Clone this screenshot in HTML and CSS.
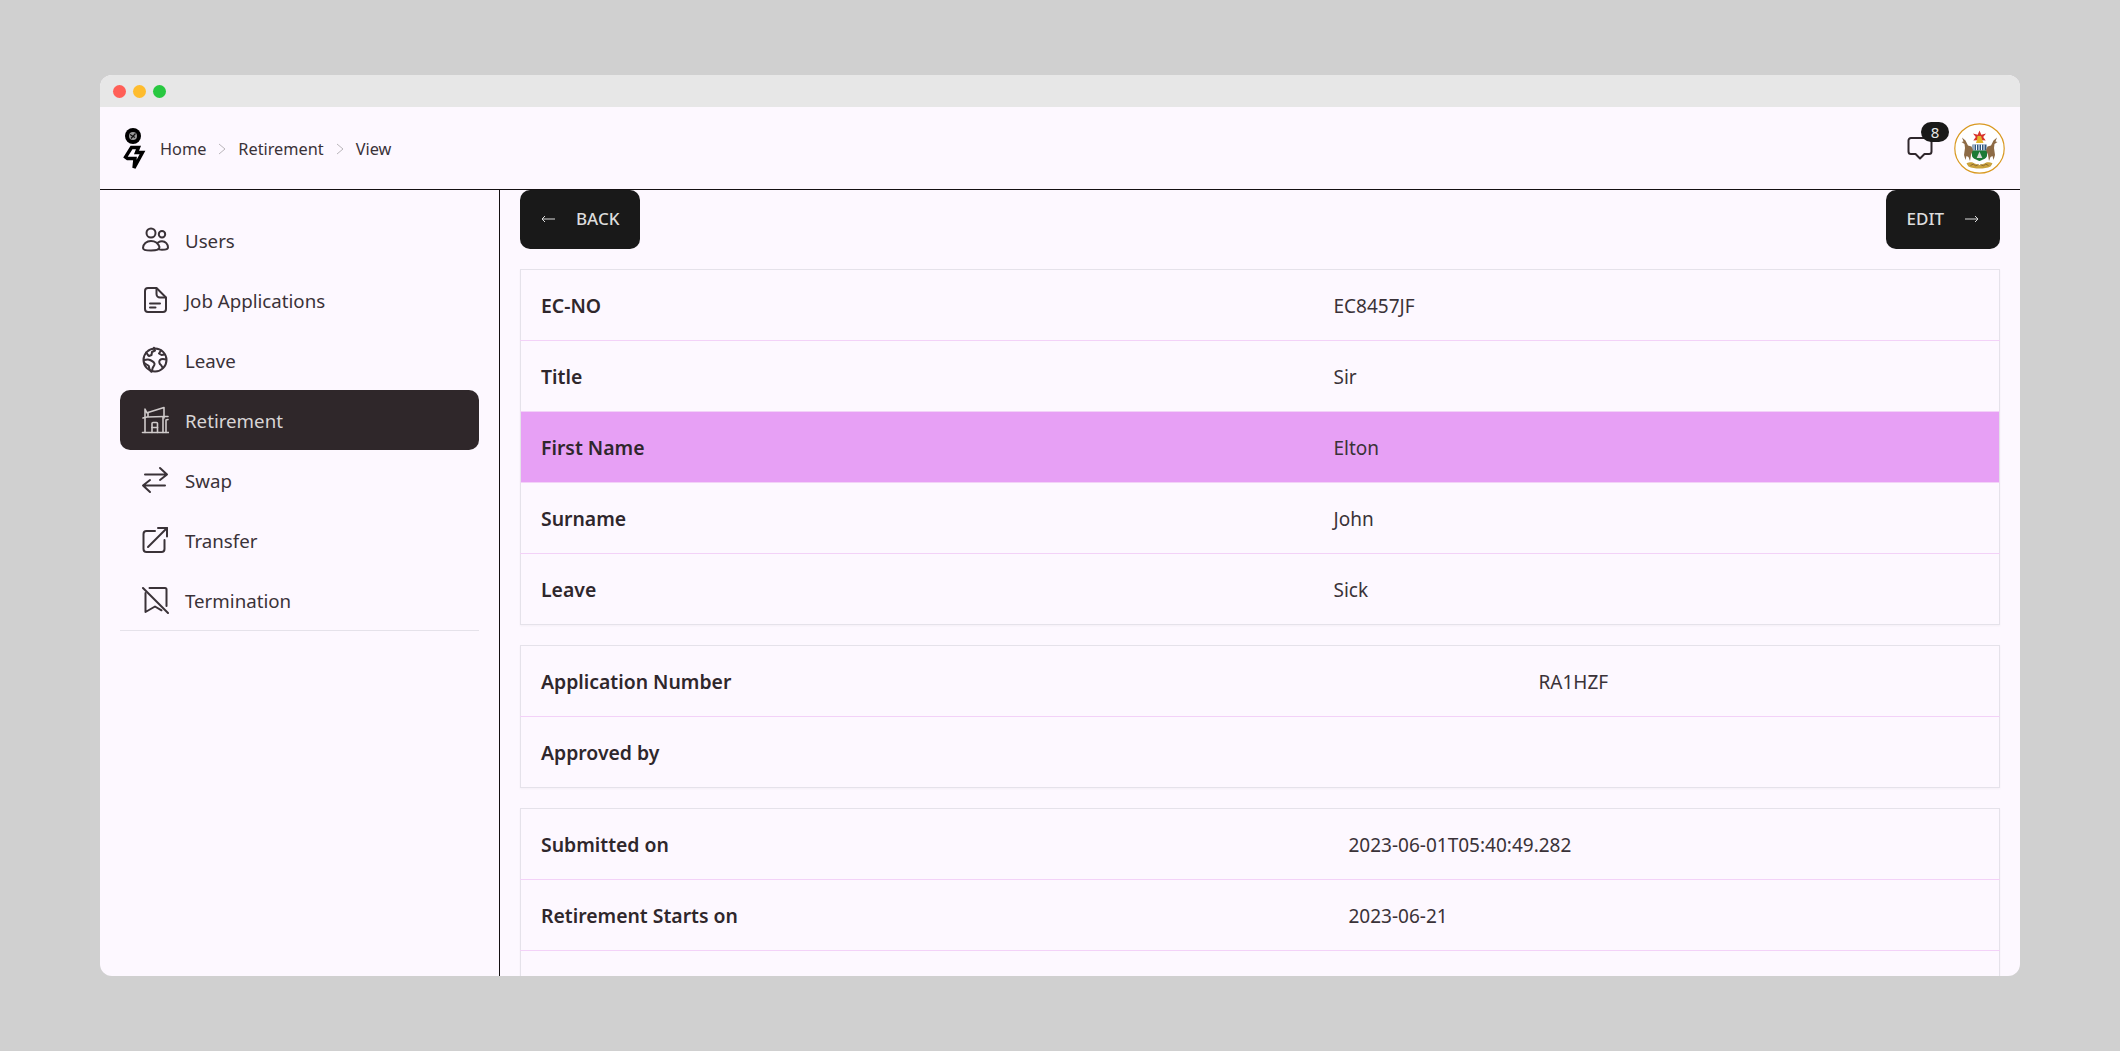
FILE: index.html
```html
<!DOCTYPE html>
<html lang="en">
<head>
<meta charset="utf-8">
<title>Retirement View</title>
<link rel="stylesheet" href="styles.css">
</head>
<body>
<div class="window">
  <div class="titlebar">
    <span class="dot dot-red"></span><span class="dot dot-yellow"></span><span class="dot dot-green"></span>
  </div>
  <header class="topbar">
    <div class="crumbs">
      <svg class="logo" viewBox="0 0 24 44" width="24" height="44">
        <circle cx="11" cy="10" r="8" fill="#000"/>
        <circle cx="11" cy="10" r="4" fill="#999"/>
        <path d="M8 8.500l5 3M13.500 7.500l-4.500 5" stroke="#111" stroke-width="1.200"/>
        <path d="M9.500 21.500h7l-2 5h6L12 42l1-9.500H5.500L3.500 31z" fill="none" stroke="#000" stroke-width="3.400" stroke-linejoin="miter"/>
      </svg>
      <a class="crumb">Home</a>
      <svg class="chev" viewBox="0 0 10 12" width="10" height="12"><path d="M2 1l6 5-6 5" fill="none" stroke="#b9b5ba" stroke-width="1"/></svg>
      <a class="crumb">Retirement</a>
      <svg class="chev" viewBox="0 0 10 12" width="10" height="12"><path d="M2 1l6 5-6 5" fill="none" stroke="#b9b5ba" stroke-width="1"/></svg>
      <a class="crumb">View</a>
    </div>
    <div class="top-actions">
      <div class="chat">
        <svg viewBox="0 0 28 26" width="28" height="26"><path d="M5 3h18a2.500 2.500 0 0 1 2.500 2.500v11A2.500 2.500 0 0 1 23 19h-4.500L14 23.500 9.500 19H5a2.500 2.500 0 0 1-2.500-2.500v-11A2.500 2.500 0 0 1 5 3z" fill="none" stroke="#2f272c" stroke-width="2" stroke-linejoin="round"/></svg>
        <span class="badge">8</span>
      </div>
      <svg class="crest" viewBox="-25.500 -25.500 51 51" width="51" height="51">
        <circle r="24.700" fill="#fff" stroke="#d99a22" stroke-width="1.200"/>
        <path d="M0-18l1.800 4.200 4.700-1.200-2.800 3.600 2.500 3.400-6.200-.5-6.200.5 2.500-3.400-2.800-3.600 4.700 1.200z" fill="#d8342c"/>
        <path d="M-2-12.500h3.500l1.500 4.500 1 2.500h-7.500l1-3z" fill="#e2b52b"/>
        <rect x="-7" y="-4" width="14" height="6" fill="#2f567e"/>
        <path d="M-5.500-4v6M-3-4v6M-.5-4v6M2-4v6M4.500-4v6" stroke="#fff" stroke-width="1"/>
        <path d="M-7.500 2h15v5c0 2.500-3.500 4-7.500 5.500-4-1.500-7.500-3-7.500-5.500z" fill="#1c7a35"/>
        <path d="M0 3l2.800 6.500h-5.600z" fill="#d8d8d8"/>
        <path d="M-8-2l-3.500-1-2.500-5-3.500-3 1.500 4-2 .500 3 2 .500 4-1 7 1.500 5 1-4 2 1 1.500 4 1-6 2-5z" fill="#8d6b45"/>
        <path d="M8-2l3.500-1 2.500-5 3.500-3-1.500 4 2 .500-3 2-.500 4 1 7-1.500 5-1-4-2 1-1.500 4-1-6-2-5z" fill="#8d6b45"/>
        <path d="M-13 15c4-2 6-1 8 0l5 1.500 5-1.500c2-1 4-2 8 0l-2 3c-3 1.500-7 2-11 2s-8-.5-11-2z" fill="#c9a23c"/>
        <path d="M-9 17l3-1.500 2 2 3-1.500M9 17l-3-1.500-2 2-3-1.500" stroke="#7a5a2e" stroke-width=".8" fill="none"/>
      </svg>
    </div>
  </header>
  <div class="body">
    <aside class="sidebar">
      <nav class="menu">
        <a class="item">
          <svg class="ico" viewBox="0 0 28 28"><circle cx="10" cy="7" r="4.500"/><circle cx="21" cy="8.300" r="3.200"/><path d="M2 22c0-4 3.500-7 8-7s7 2 8.500 6c0 2.500-3.500 3.500-8.500 3.500S2 23.800 2 22z"/><path d="M17 16.500c1.300-.8 2.700-1.200 4-1.200 3.500 0 6 2.800 6 6.200 0 1.700-3 2.300-6 2.300-1 0-2-.1-3-.4"/></svg>
          <span>Users</span>
        </a>
        <a class="item">
          <svg class="ico" viewBox="0 0 28 28"><path d="M7 2h8.500L25 11.500V23a3 3 0 0 1-3 3H7a3 3 0 0 1-3-3V5a3 3 0 0 1 3-3z"/><path d="M15.500 2.500V8a3.500 3.500 0 0 0 3.500 3.500h5.500"/><path d="M9 17.500h10M9 21.500h5.500"/></svg>
          <span>Job Applications</span>
        </a>
        <a class="item">
          <svg class="ico" viewBox="0 0 28 28"><circle cx="14" cy="14" r="11.500"/><path d="M5 6.500c1.500 1 1.500 3 3 3.500l2.500-1 .5-3 3-1.500-1-2.700M3 14c2 0 4-1 6 0s4 1.500 4.500 3.500-1.500 3-2 5-.5 3-1 3.300c-1.500-1-2.500-3.500-2.700-5.800C6 18.500 4 18 3 16.500"/><path d="M20 4.500l-2 3 2.500 1.500 3-.5M25 13.500c-2-.5-4.500-1-6 .5s-.5 4 1 5l1.500 2.500"/></svg>
          <span>Leave</span>
        </a>
        <a class="item is-active">
          <svg class="ico" viewBox="0 0 28 28"><path d="M1.500 26.500h26"/><path d="M4 26.500V3l2 4 1-.500 16-5v10.500"/><path d="M2 12l4-1 17.500-.5h3.500"/><path d="M7 6.500v4"/><path d="M11 26.500v-9a1 1 0 0 1 1-1h3.500a1 1 0 0 1 1 1v9"/><path d="M11 21.500h5.500"/><path d="M22 26.500V11M25 26.500V14l2-.5"/></svg>
          <span>Retirement</span>
        </a>
        <a class="item">
          <svg class="ico" viewBox="0 0 28 28"><path d="M26 8.500H4M19 2l7 6.500-7 5.500"/><path d="M2 19.500h22M9 14l-7 5.500L9 26"/></svg>
          <span>Swap</span>
        </a>
        <a class="item">
          <svg class="ico" viewBox="0 0 28 28"><path d="M14 5H5.500A3 3 0 0 0 2.500 8v15a3 3 0 0 0 3 3h15a3 3 0 0 0 3-3v-9"/><path d="M7 21L26 2"/><path d="M17 2h9v8.500"/></svg>
          <span>Transfer</span>
        </a>
        <a class="item">
          <svg class="ico" viewBox="0 0 28 28"><path d="M2 2l25 25"/><path d="M8.500 2H24a1.500 1.500 0 0 1 1.500 1.500V20"/><path d="M4.500 7v19l9.500-5.500 6.500 3.800"/></svg>
          <span>Termination</span>
        </a>
      </nav>
    </aside>
    <main class="content">
      <div class="actions">
        <button class="btn"><svg class="arrow" viewBox="0 0 14 8" width="14" height="8"><path d="M14 4H1M4 1L1 4l3 3"/></svg><span>BACK</span></button>
        <button class="btn"><span>EDIT</span><svg class="arrow" viewBox="0 0 14 8" width="14" height="8"><path d="M0 4h13M10 1l3 3-3 3"/></svg></button>
      </div>
      <table class="card cols-a">
        <tr><th>EC-NO</th><td>EC8457JF</td></tr>
        <tr><th>Title</th><td>Sir</td></tr>
        <tr class="hl"><th>First Name</th><td>Elton</td></tr>
        <tr><th>Surname</th><td>John</td></tr>
        <tr><th>Leave</th><td>Sick</td></tr>
      </table>
      <table class="card cols-b">
        <tr><th>Application Number</th><td>RA1HZF</td></tr>
        <tr><th>Approved by</th><td></td></tr>
      </table>
      <table class="card cols-c">
        <tr><th>Submitted on</th><td>2023-06-01T05:40:49.282</td></tr>
        <tr><th>Retirement Starts on</th><td>2023-06-21</td></tr>
        <tr><th></th><td></td></tr>
      </table>
    </main>
  </div>
</div>
</body>
</html>
```
FILE: styles.css
```css
* { box-sizing: border-box; }
html, body { margin: 0; height: 100%; overflow: hidden; }
body {
  background: #d0d0d0;
  padding: 75px 100px;
  font-family: "Noto Sans", "Open Sans", sans-serif;
  color: #2f272c;
}
.window {
  width: 1920px;
  height: 901px;
  background: #fdf8ff;
  border-radius: 12px;
  overflow: hidden;
  display: flex;
  flex-direction: column;
}
.titlebar {
  height: 32px;
  background: #e7e7e7;
  display: flex;
  align-items: center;
  gap: 7px;
  padding-left: 13px;
  flex: none;
}
.dot { width: 13px; height: 13px; border-radius: 50%; }
.dot-red { background: #ff5f57; }
.dot-yellow { background: #febc2e; }
.dot-green { background: #28c840; }
.topbar {
  height: 83px;
  flex: none;
  border-bottom: 1px solid #141012;
  display: flex;
  align-items: center;
  justify-content: space-between;
  padding: 0 15px 0 22px;
}
.crumbs { display: flex; align-items: center; font-size: 16.3px; }
.logo { margin-right: 14px; display: block; }
.crumb { color: #3a3238; padding-top: 2px; }
.chev { margin: 2px 11px 0; }
.top-actions { display: flex; align-items: center; gap: 20px; }
.chat { position: relative; width: 28px; height: 26px; }
.chat svg { display: block; }
.badge {
  position: absolute;
  top: -13px;
  left: 15px;
  width: 28px;
  height: 20px;
  border-radius: 10px;
  background: #191919;
  color: #e8e8e8;
  font-size: 15px;
  display: flex;
  align-items: center;
  justify-content: center;
}
.crest { display: block; }
.body { flex: 1; display: flex; min-height: 0; }
.sidebar {
  width: 400px;
  flex: none;
  border-right: 1px solid #141012;
  padding: 20px 20px 0;
}
.menu { border-bottom: 1px solid #e5e2ea; }
.item {
  height: 60px;
  display: flex;
  align-items: center;
  gap: 16px;
  padding: 0 21px;
  border-radius: 10px;
  font-size: 18.7px;
  color: #3a3238;
}
.ico {
  width: 28px;
  height: 28px;
  flex: none;
  fill: none;
  stroke: #3a3238;
  stroke-width: 2;
  stroke-linecap: round;
  stroke-linejoin: round;
}
.is-active { background: #2f272a; color: #d9d5d6; }
.is-active .ico { stroke: #cfcaca; stroke-width: 1.600; }
.content { flex: 1; min-width: 0; padding: 0 20px; overflow: hidden; }
.actions { display: flex; justify-content: space-between; margin-bottom: 20px; }
.btn {
  height: 59px;
  padding: 0 21px 2px;
  background: #191919;
  color: #dcdcdc;
  border: 0;
  border-radius: 10px;
  font: 500 17px "Noto Sans", sans-serif;
  display: flex;
  align-items: center;
  gap: 21px;
}
.arrow { display: block; fill: none; stroke: #dcdcdc; stroke-width: 1; }
.card {
  width: 100%;
  table-layout: fixed;
  border-collapse: collapse;
  border: 1px solid #e5e2ea;
  margin-bottom: 20px;
  box-shadow: 0 1px 2px rgba(0, 0, 0, .04);
}
.card tr { height: 71px; border-bottom: 1px solid #f3d2f8; }
.card tr:last-child { border-bottom: 0; }
.card th, .card td { padding: 0 20px; font-size: 19px; text-align: left; }
.card th { font-weight: 600; font-size: 19.400px; color: #2f272c; }
.card td { color: #3a3238; padding-top: 1px; }
.hl { background: #e7a0f5; }
.cols-a th { width: 793px; }
.cols-b th { width: 998px; }
.cols-c th { width: 808px; }
```
